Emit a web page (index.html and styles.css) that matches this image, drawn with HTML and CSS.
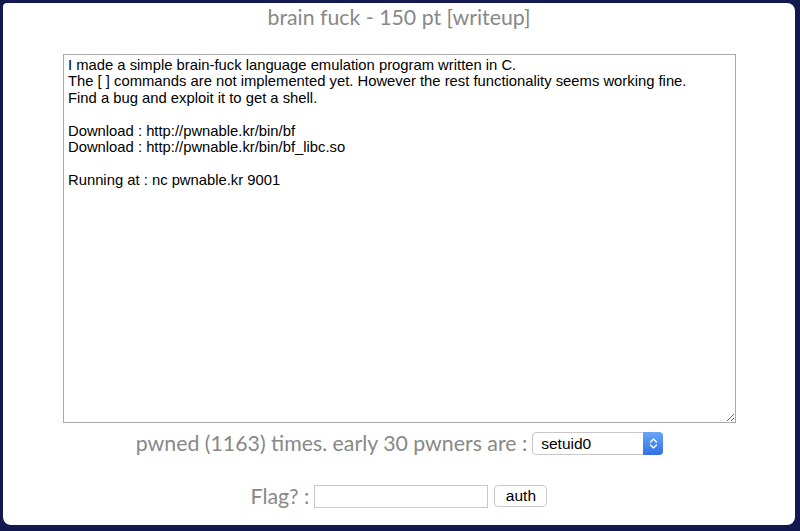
FILE: index.html
```html
<!DOCTYPE html>
<html>
<head>
<meta charset="utf-8">
<link rel="stylesheet" href="styles.css">
</head>
<body>
<div class="page">
  <h1 class="title">brain fuck - 150 pt [writeup]</h1>
  <textarea class="desc">I made a simple brain-fuck language emulation program written in C. 
The [ ] commands are not implemented yet. However the rest functionality seems working fine. 
Find a bug and exploit it to get a shell. 

Download : http://pwnable.kr/bin/bf
Download : http://pwnable.kr/bin/bf_libc.so

Running at : nc pwnable.kr 9001
</textarea>
  <div class="row pwned">
    <span class="label">pwned (1163) times. early 30 pwners are :</span>
    <span class="select">
      <span class="select-text">setuid0</span>
      <span class="select-arrow">
        <svg width="9" height="13" viewBox="0 0 9 13"><path d="M1.5 5 L4.5 2 L7.5 5 M1.5 8 L4.5 11 L7.5 8" fill="none" stroke="#fff" stroke-width="1.3" stroke-linecap="round" stroke-linejoin="round"/></svg>
      </span>
    </span>
  </div>
  <div class="row flag">
    <span class="label">Flag? :</span>
    <input class="flag-input" type="text">
    <button class="auth">auth</button>
  </div>
</div>
</body>
</html>
```

FILE: styles.css
```css
html, body {
  margin: 0;
  padding: 0;
  height: 100%;
}
body {
  background: #13194f;
  padding: 3px 5px 6px 3px;
  box-sizing: border-box;
  height: 531px;
  overflow: hidden;
}
.page {
  background: #fff;
  height: 522px;
  border-radius: 4px 8px 8px 8px;
  display: flex;
  flex-direction: column;
  align-items: center;
}
.title {
  font-family: Lato, "Open Sans", sans-serif;
  font-weight: normal;
  font-size: 21.3px;
  line-height: 24px;
  color: #888;
  margin: 2px 0 0 0;
}
.desc {
  box-sizing: border-box;
  width: 673px;
  height: 369px;
  margin: 25px 0 0 1px;
  border: 1px solid #a9a9a9;
  padding: 2px 4px;
  font-family: "Liberation Sans", Arial, sans-serif;
  font-size: 14.8px;
  line-height: 16.4px;
  color: #000;
  resize: both;
}
.row {
  display: flex;
  align-items: center;
  font-family: Lato, "Open Sans", sans-serif;
  font-size: 21.3px;
  color: #888;
}
.pwned {
  margin-top: 8px;
  height: 24px;
  margin-left: 1px;
}
.label {
  line-height: 24px;
}
.select {
  position: relative;
  display: inline-block;
  box-sizing: border-box;
  width: 131px;
  height: 23px;
  margin-left: 5px;
  border: 1px solid #c8c8c8;
  border-radius: 4px;
  background: #fff;
  font-family: "Liberation Sans", Arial, sans-serif;
  font-size: 15.5px;
  color: #000;
}
.select-text {
  display: block;
  padding-left: 8px;
  line-height: 21px;
}
.select-arrow {
  position: absolute;
  right: -1px;
  top: -1px;
  width: 20px;
  height: 23px;
  border-radius: 0 4px 4px 0;
  background: linear-gradient(#6aa6f8, #2f72e8);
  display: flex;
  align-items: center;
  justify-content: center;
}
.flag {
  margin-top: 29px;
  height: 24px;
  margin-left: 0;
}
.flag-input {
  box-sizing: border-box;
  width: 174px;
  height: 23px;
  margin: 0 0 0 5px;
  border: 1px solid #c8c8c8;
  padding: 0 3px;
}
.auth {
  box-sizing: border-box;
  height: 22px;
  width: 53px;
  margin-left: 6px;
  border: 1px solid #c8c8c8;
  border-radius: 4px;
  background: #fff;
  font-family: "Liberation Sans", Arial, sans-serif;
  font-size: 15.5px;
  color: #000;
  padding: 0;
}
```
